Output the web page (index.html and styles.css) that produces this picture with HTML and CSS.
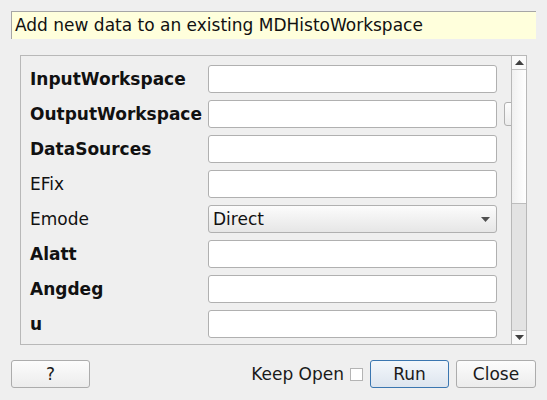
FILE: index.html
```html
<!DOCTYPE html>
<html>
<head>
<meta charset="utf-8">
<link rel="stylesheet" href="styles.css">
</head>
<body>
<div class="dialog">
  <div class="desc">Add new data to an existing MDHistoWorkspace</div>
  <div class="frame">
    <div class="viewport">
      <div class="rows">
        <div class="row"><span class="lbl b">InputWorkspace</span><span class="inp"></span></div>
        <div class="row"><span class="lbl b">OutputWorkspace</span><span class="inp"></span><span class="side"></span></div>
        <div class="row"><span class="lbl b">DataSources</span><span class="inp"></span></div>
        <div class="row"><span class="lbl">EFix</span><span class="inp"></span></div>
        <div class="row"><span class="lbl">Emode</span><span class="combo">Direct<svg class="arr" width="9" height="5" viewBox="0 0 9 5"><path d="M0 0H9L4.5 5Z" fill="#505050"/></svg></span></div>
        <div class="row"><span class="lbl b">Alatt</span><span class="inp"></span></div>
        <div class="row"><span class="lbl b">Angdeg</span><span class="inp"></span></div>
        <div class="row"><span class="lbl b">u</span><span class="inp"></span></div>
      </div>
    </div>
    <div class="sbar">
      <div class="sbtn"><svg width="9" height="5" viewBox="0 0 9 5"><path d="M4.5 0L9 5H0Z" fill="#404040"/></svg></div>
      <div class="thumb"></div>
      <div class="track"></div>
      <div class="sbtn down"><svg width="9" height="5" viewBox="0 0 9 5"><path d="M0 0H9L4.5 5Z" fill="#404040"/></svg></div>
    </div>
  </div>
  <div class="footer">
    <button class="btn help">?</button>
    <span class="spacer"></span>
    <span class="keep">Keep Open</span>
    <span class="check"></span>
    <button class="btn run">Run</button>
    <button class="btn close">Close</button>
  </div>
</div>
</body>
</html>
```

FILE: styles.css
```css
html, body {
  margin: 0;
  padding: 0;
  background: #efefef;
  font-family: "DejaVu Sans", sans-serif;
  color: #1a1a1a;
}
.dialog {
  width: 547px;
  height: 400px;
  box-sizing: border-box;
  padding: 11px 11px 0 11px;
  display: flex;
  flex-direction: column;
}
.desc {
  width: 525px;
  height: 28px;
  box-sizing: border-box;
  background: #ffffdc;
  border-top: 1px solid #a6a6a6;
  border-left: 1px solid #a6a6a6;
  padding-left: 3px;
  font-size: 17px;
  line-height: 26px;
  color: #111;
}
.frame {
  margin: 16px 0 0 9px;
  width: 507px;
  height: 290px;
  box-sizing: border-box;
  border: 1px solid #b8b8b8;
  display: flex;
}
.viewport {
  flex: 1;
  overflow: hidden;
  padding: 9px 0 0 9px;
}
.rows {
  display: flex;
  flex-direction: column;
  gap: 7px;
  width: 600px;
}
.row {
  display: flex;
  align-items: center;
  height: 28px;
}
.lbl {
  width: 178px;
  flex: none;
  font-size: 17px;
  color: #111;
}
.lbl.b { font-weight: bold; }
.inp, .combo {
  width: 289px;
  height: 28px;
  box-sizing: border-box;
  border: 1px solid #b0b0b0;
  border-radius: 3px;
  background: #fff;
  flex: none;
}
.combo {
  background: linear-gradient(#fcfcfc, #e6e6e6);
  font-size: 17px;
  color: #111;
  padding-left: 4px;
  display: flex;
  align-items: center;
  justify-content: space-between;
  padding-right: 6px;
}
.arr { margin-top: 1px; }
.side {
  width: 24px;
  height: 24px;
  margin-left: 7px;
  box-sizing: border-box;
  border: 1px solid #b0b0b0;
  border-radius: 3px;
  background: linear-gradient(#fdfdfd, #ececec);
  flex: none;
}
.sbar {
  width: 14px;
  border-left: 1px solid #b8b8b8;
  display: flex;
  flex-direction: column;
  background: #e4e4e4;
}
.sbtn {
  height: 14px;
  box-sizing: border-box;
  background: #fafafa;
  border-bottom: 1px solid #c4c4c4;
  display: flex;
  align-items: center;
  justify-content: center;
}
.sbtn.down {
  border-bottom: none;
  border-top: 1px solid #c4c4c4;
}
.thumb {
  height: 134px;
  box-sizing: border-box;
  background: linear-gradient(90deg, #f0f0f0, #ffffff);
  border-bottom: 1px solid #bdbdbd;
}
.track {
  flex: 1;
  background: #e3e3e3;
}
.footer {
  margin-top: 15px;
  display: flex;
  align-items: center;
  height: 28px;
}
.spacer { flex: 1; }
.btn {
  height: 28px;
  box-sizing: border-box;
  border: 1px solid #acacac;
  border-radius: 3px;
  background: linear-gradient(#fcfcfc, #ececec);
  font-family: "DejaVu Sans", sans-serif;
  font-size: 17px;
  color: #1a1a1a;
  padding: 0;
}
.help { width: 79px; }
.keep {
  font-size: 17px;
  color: #1a1a1a;
}
.check {
  width: 11px;
  height: 11px;
  border: 1px solid #b4b4b4;
  background: #fff;
  margin: 0 7px 0 6px;
}
.run {
  width: 79px;
  border-color: #3a76b0;
  background: linear-gradient(#f3f7fb, #dde5ee);
}
.close {
  width: 80px;
  margin-left: 7px;
}
```
